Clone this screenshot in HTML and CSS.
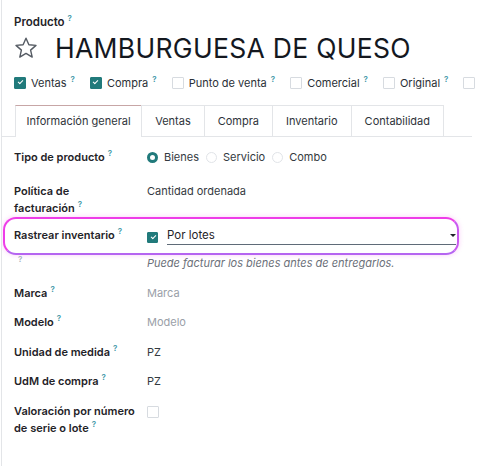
FILE: index.html
```html
<!DOCTYPE html>
<html lang="es">
<head>
  <meta charset="UTF-8">
  <title>Producto</title>
  <link rel="stylesheet" href="styles.css">
</head>
<body>

  <div class="sheet">
    <div class="title-label">Producto<sup>?</sup></div>

    <div class="title-row">
      <svg class="star" width="24" height="24" viewBox="0 0 24 24">
        <path d="M12 2.2l2.9 6.6 7.1.6-5.4 4.7 1.6 7-6.2-3.7-6.2 3.7 1.6-7L2 9.4l7.1-.6z"
              fill="none" stroke="#555b63" stroke-width="1.4" stroke-linejoin="round"/>
      </svg>
      <h1>HAMBURGUESA DE QUESO</h1>
    </div>

    <div class="options">
      <label class="opt"><span class="check on"></span><span>Ventas<sup>?</sup></span></label>
      <label class="opt"><span class="check on"></span><span>Compra<sup>?</sup></span></label>
      <label class="opt"><span class="check"></span><span>Punto de venta<sup>?</sup></span></label>
      <label class="opt"><span class="check"></span><span>Comercial<sup>?</sup></span></label>
      <label class="opt"><span class="check"></span><span>Original<sup>?</sup></span></label>
      <label class="opt"><span class="check"></span></label>
    </div>

    <div class="tabs">
      <div class="tab active">Información general</div>
      <div class="tab">Ventas</div>
      <div class="tab">Compra</div>
      <div class="tab">Inventario</div>
      <div class="tab">Contabilidad</div>
    </div>

    <div class="form">
      <div class="row tall">
        <div class="label">Tipo de producto<sup>?</sup></div>
        <div class="value radios">
          <span class="radio on"></span>Bienes
          <span class="radio"></span>Servicio
          <span class="radio"></span>Combo
        </div>
      </div>

      <div class="row billing">
        <div class="label">Política de<br>facturación<sup>?</sup></div>
        <div class="value">Cantidad ordenada</div>
      </div>

      <div class="row highlight">
        <div class="label">Rastrear inventario<sup>?</sup></div>
        <div class="value tracking">
          <span class="check on"></span>
          <div class="select">Por lotes<span class="caret"></span></div>
        </div>
      </div>

      <div class="row hint">
        <div class="label"><sup class="muted">?</sup></div>
        <div class="value help">Puede facturar los bienes antes de entregarlos.</div>
      </div>

      <div class="row">
        <div class="label">Marca<sup>?</sup></div>
        <div class="value placeholder">Marca</div>
      </div>

      <div class="row">
        <div class="label">Modelo<sup>?</sup></div>
        <div class="value placeholder">Modelo</div>
      </div>

      <div class="row">
        <div class="label">Unidad de medida<sup>?</sup></div>
        <div class="value">PZ</div>
      </div>

      <div class="row">
        <div class="label">UdM de compra<sup>?</sup></div>
        <div class="value">PZ</div>
      </div>

      <div class="row">
        <div class="label">Valoración por número<br>de serie o lote<sup>?</sup></div>
        <div class="value"><span class="check"></span></div>
      </div>
    </div>
  </div>

</body>
</html>
```

FILE: styles.css
```css
body {
  margin: 0;
  font-family: Inter, "Noto Sans", sans-serif;
  font-size: 11px;
  color: #1f2328;
  background: #fff;
}

.sheet {
  box-sizing: border-box;
  margin-left: 1px;
  border-left: 1px solid #e3e5e8;
  padding: 14px 0 0 12px;
  height: 466px;
  overflow: hidden;
}

sup {
  font-size: 8px;
  color: #3f97a8;
  margin-left: 3px;
  vertical-align: baseline;
  position: relative;
  top: -5px;
  line-height: 0;
  font-weight: 600;
}

sup.muted {
  color: #a7b3c0;
  margin-left: 4px;
}

.title-label {
  font-weight: 600;
  font-size: 11.5px;
  line-height: 16px;
}

.title-row {
  display: flex;
  align-items: center;
  gap: 17px;
  margin-top: 3px;
}

.star {
  flex: none;
}

h1 {
  margin: 0;
  font-weight: 400;
  font-size: 26.5px;
  line-height: 30px;
  color: #14181f;
  letter-spacing: 0.3px;
  white-space: nowrap;
}

.options {
  display: flex;
  gap: 15px;
  margin-top: 12px;
  white-space: nowrap;
  overflow: hidden;
  font-size: 11px;
  line-height: 16px;
  color: #2a2f36;
}

.opt {
  display: flex;
  align-items: center;
  gap: 5px;
}

.opt sup {
  margin-left: 4px;
}

.check {
  display: inline-block;
  box-sizing: border-box;
  width: 12px;
  height: 12px;
  border: 1px solid #d7dbe0;
  border-radius: 1px;
  background: #fff;
  flex: none;
  position: relative;
}

.check.on {
  background: #217a7b;
  border-color: #217a7b;
}

.check.on::after {
  content: "";
  position: absolute;
  left: 2.5px;
  top: 2px;
  width: 4px;
  height: 2px;
  border-left: 1.5px solid #fff;
  border-bottom: 1.5px solid #fff;
  transform: rotate(-45deg);
}

.tabs {
  display: flex;
  margin: 14px 8px 0 -13px;
  padding-left: 14px;
  border-bottom: 1px solid #e3e5e8;
  font-size: 11px;
  color: #2e333a;
}

.tab {
  flex: none;
  white-space: nowrap;
  padding: 0 13px;
  height: 30px;
  line-height: 30px;
  border: 1px solid #e3e5e8;
  border-bottom: none;
  margin-left: -1px;
  margin-bottom: -1px;
  background: #fff;
}

.tab:first-child {
  margin-left: 0;
}

.tab.active {
  border-top-color: #c7a6a6;
  height: 31px;
  padding: 0 10.5px;
}

.form {
  padding-top: 12px;
}

.row {
  display: grid;
  grid-template-columns: 133px 1fr;
  line-height: 17px;
  margin-bottom: 12.4px;
}

.row.tall {
  margin-bottom: 17px;
}

.row.billing {
  margin-bottom: 10px;
}

.row.hint {
  margin-bottom: 13px;
}

.label {
  font-weight: 600;
  color: #1f2328;
}

.value {
  color: #343a41;
}

.radios {
  display: flex;
  align-items: center;
  gap: 6px;
}

.radio {
  width: 11px;
  height: 11px;
  border-radius: 50%;
  border: 1px solid #e1e4e8;
  box-sizing: border-box;
  margin-left: 1px;
}

.radio:first-child {
  margin-left: 0;
}

.radio.on {
  border: 3px solid #217a7b;
}

.highlight {
  position: relative;
  margin-bottom: 10px;
}

.highlight::after {
  content: "";
  position: absolute;
  left: -11px;
  right: 21px;
  top: -10px;
  bottom: -10px;
  border: 2px solid #ee3de8;
  border-right-color: #c95af0;
  border-bottom-color: #b564f1;
  border-radius: 13px;
  box-shadow: 0 0 5px rgba(238, 61, 232, 0.25);
  pointer-events: none;
}

.tracking {
  display: flex;
  align-items: center;
  gap: 9px;
}

.tracking .check {
  width: 11px;
  height: 11px;
}

.select {
  flex: 1;
  position: relative;
  margin-right: 24px;
  color: #1f2328;
  font-size: 11.5px;
  border-bottom: 1px solid #5f6b78;
}

.caret {
  position: absolute;
  right: 0;
  top: 7px;
  border-left: 3px solid transparent;
  border-right: 3px solid transparent;
  border-top: 3px solid #1f2328;
}

.help {
  font-style: italic;
  color: #6b7079;
  font-size: 11px;
}

.placeholder {
  color: #9aa0a8;
}

.row .value .check {
  margin-top: 3px;
}
```
